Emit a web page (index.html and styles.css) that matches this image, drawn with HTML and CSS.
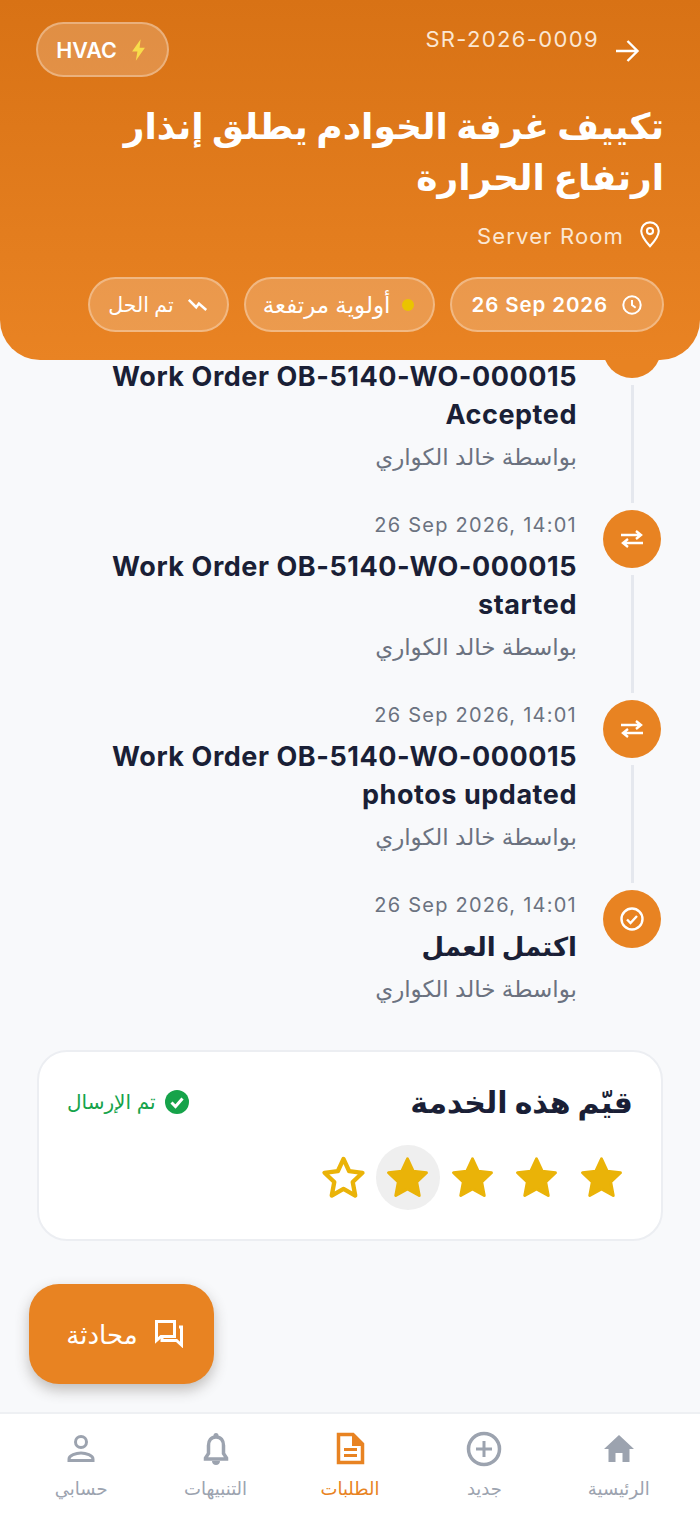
FILE: index.html
```html
<!DOCTYPE html>
<html lang="ar" dir="rtl">
<head>
  <meta charset="UTF-8" />
  <meta name="viewport" content="width=device-width, initial-scale=1.0"/>
  <title>SR-2026-0009</title>
  <link rel="stylesheet" href="styles.css">
</head>
<body>
  <div class="screen">

    <!-- Header -->
    <header class="hero">
      <div class="hero-top">
        <div class="hero-ref">
          <svg class="ic-arrow" viewBox="0 0 24 24"><path d="M1 12h21M12.500 2l10 10-10 10"/></svg>
          <span dir="ltr">SR-2026-0009</span>
        </div>
        <div class="pill pill-type">
          <svg class="ic-bolt" viewBox="0 0 14 20"><path d="M9 0 1 11.500h5L4.500 20 13 8H8z"/></svg>
          <span dir="ltr">HVAC</span>
        </div>
      </div>
      <h1>تكييف غرفة الخوادم يطلق إنذار ارتفاع الحرارة</h1>
      <div class="hero-place">
        <svg class="ic-pin" viewBox="0 0 24 24"><path d="M12 2C7.500 2 4.500 5.400 4.500 9.500 4.500 14.500 12 22.500 12 22.500s7.500-8 7.500-13C19.500 5.400 16.500 2 12 2z"/><circle cx="12" cy="9.500" r="2.600"/></svg>
        <span dir="ltr">Server Room</span>
      </div>
      <div class="chips">
        <div class="pill chip chip-date">
          <svg class="ic-clock" viewBox="0 0 24 24"><circle cx="12" cy="12" r="9.500"/><path d="M12 6.500V12l4 3"/></svg>
          <span dir="ltr">26 Sep 2026</span>
        </div>
        <div class="pill chip chip-wide">
          <span class="dot"></span>
          <span>أولوية مرتفعة</span>
        </div>
        <div class="pill chip chip-status">
          <svg class="ic-status" viewBox="0 0 24 14"><path d="M2 2l8 8 3-4 8 7"/></svg>
          <span>تم الحل</span>
        </div>
      </div>
    </header>

    <!-- Timeline -->
    <main class="content">
      <div class="timeline">
        <div class="tl-item">
          <div class="tl-rail">
            <div class="tl-node"></div>
            <div class="tl-line"></div>
          </div>
          <div class="tl-body">
            <div class="tl-date" dir="ltr">26 Sep 2026, 14:01</div>
            <div class="tl-title latin-title" dir="ltr">Work Order OB-5140-WO-000015 Accepted</div>
            <div class="tl-by">بواسطة خالد الكواري</div>
          </div>
        </div>
        <div class="tl-item">
          <div class="tl-rail">
            <div class="tl-node">
              <svg class="ic-swap" viewBox="0 0 24 18"><path d="M1 5h20M16 1l5 4-5 4M23 13H3M8 9l-5 4 5 4"/></svg>
            </div>
            <div class="tl-line"></div>
          </div>
          <div class="tl-body">
            <div class="tl-date" dir="ltr">26 Sep 2026, 14:01</div>
            <div class="tl-title latin-title" dir="ltr">Work Order OB-5140-WO-000015 started</div>
            <div class="tl-by">بواسطة خالد الكواري</div>
          </div>
        </div>
        <div class="tl-item">
          <div class="tl-rail">
            <div class="tl-node">
              <svg class="ic-swap" viewBox="0 0 24 18"><path d="M1 5h20M16 1l5 4-5 4M23 13H3M8 9l-5 4 5 4"/></svg>
            </div>
            <div class="tl-line"></div>
          </div>
          <div class="tl-body">
            <div class="tl-date" dir="ltr">26 Sep 2026, 14:01</div>
            <div class="tl-title latin-title" dir="ltr">Work Order OB-5140-WO-000015 photos updated</div>
            <div class="tl-by">بواسطة خالد الكواري</div>
          </div>
        </div>
        <div class="tl-item tl-last">
          <div class="tl-rail">
            <div class="tl-node">
              <svg class="ic-done" viewBox="0 0 24 24"><circle cx="12" cy="12" r="10.500"/><path d="M7 12.500l3.500 3.500L17 9"/></svg>
            </div>
          </div>
          <div class="tl-body">
            <div class="tl-date" dir="ltr">26 Sep 2026, 14:01</div>
            <div class="tl-title">اكتمل العمل</div>
            <div class="tl-by">بواسطة خالد الكواري</div>
          </div>
        </div>
      </div>

      <!-- Rating -->
      <section class="rate-card">
        <div class="rate-head">
          <h2>قيّم هذه الخدمة</h2>
          <div class="rate-sent">
            <svg class="ic-sent" viewBox="0 0 24 24"><circle cx="12" cy="12" r="12"/><path d="M6.500 12.500l4 4 7-8"/></svg>
            <span>تم الإرسال</span>
          </div>
        </div>
        <div class="stars">
          <span class="star"><svg viewBox="0 0 24 24"><path d="M12 2.500l2.900 6.300 6.800.8-5 4.700 1.300 6.900-6-3.400-6 3.400 1.300-6.900-5-4.700 6.800-.8z"/></svg></span>
          <span class="star"><svg viewBox="0 0 24 24"><path d="M12 2.500l2.900 6.300 6.800.8-5 4.700 1.300 6.900-6-3.400-6 3.400 1.300-6.900-5-4.700 6.800-.8z"/></svg></span>
          <span class="star"><svg viewBox="0 0 24 24"><path d="M12 2.500l2.900 6.300 6.800.8-5 4.700 1.300 6.900-6-3.400-6 3.400 1.300-6.900-5-4.700 6.800-.8z"/></svg></span>
          <span class="star star-press"><svg viewBox="0 0 24 24"><path d="M12 2.500l2.900 6.300 6.800.8-5 4.700 1.300 6.900-6-3.400-6 3.400 1.300-6.900-5-4.700 6.800-.8z"/></svg></span>
          <span class="star star-empty"><svg viewBox="0 0 24 24"><path d="M12 2.500l2.900 6.300 6.800.8-5 4.700 1.300 6.900-6-3.400-6 3.400 1.300-6.900-5-4.700 6.800-.8z"/></svg></span>
        </div>
      </section>
    </main>

    <!-- Chat button -->
    <button class="fab">
      <svg class="ic-chat" viewBox="0 0 28 28"><path d="M1.500 1.500h18v15H6l-4.500 4z"/><path d="M24 7h2.500v18l-5-4.500H7V18"/></svg>
      <span>محادثة</span>
    </button>

    <!-- Bottom nav -->
    <nav class="tabs">
      <div class="tab">
        <svg viewBox="0 0 36 36"><path class="fill" d="M18 4 3 18h4.500v13h7v-9h7v9h7V18H33z"/></svg>
        <span>الرئيسية</span>
      </div>
      <div class="tab">
        <svg viewBox="0 0 36 36"><circle class="line" cx="18" cy="18" r="15.500"/><path class="line thin" d="M18 10v16M10 18h16"/></svg>
        <span>جديد</span>
      </div>
      <div class="tab tab-on">
        <svg viewBox="0 0 36 36"><path class="line" d="M6.500 3.500H21l9.500 9.500v18.500H6.500z"/><path class="fill" d="M20 3h2l9 9v3H20z"/><path class="line thin" d="M12 18.500h13M12 24.500h13"/></svg>
        <span>الطلبات</span>
      </div>
      <div class="tab">
        <svg viewBox="0 0 36 36"><path class="line" d="M18 6c-5 0-7.500 3.500-7.500 8.500v8L7.500 27v1h21v-1l-3-4.500v-8C25.500 9.500 23 6 18 6z"/><circle class="fill" cx="18" cy="4.500" r="2.500"/><path class="fill" d="M14 30h8c0 2.500-1.800 4-4 4s-4-1.500-4-4z"/></svg>
        <span>التنبيهات</span>
      </div>
      <div class="tab">
        <svg viewBox="0 0 36 36"><circle class="line thin" cx="18" cy="11" r="5.500"/><path class="line thin" d="M6 29.500V28c0-3.500 7-6 12-6s12 2.500 12 6v1.500z"/></svg>
        <span>حسابي</span>
      </div>
    </nav>
  </div>
</body>
</html>
```
FILE: styles.css
```css
* {
  box-sizing: border-box;
}

html, body {
  margin: 0;
  padding: 0;
}

body {
  font-family: Inter, "Noto Sans", "DejaVu Sans", sans-serif;
  background: #f8f9fb;
  color: #1a1f36;
}

.screen {
  position: relative;
  width: 700px;
  height: 1515px;
  overflow: hidden;
  display: flex;
  flex-direction: column;
}

/* Header */
.hero {
  position: relative;
  z-index: 2;
  height: 360px;
  flex-shrink: 0;
  padding: 22px 36px 0;
  background: linear-gradient(to bottom, #d87215, #e98323);
  border-radius: 0 0 40px 40px;
  color: #fff;
}

.hero-top {
  display: flex;
  justify-content: space-between;
  align-items: flex-start;
}

.hero-ref {
  display: flex;
  align-items: flex-start;
  gap: 15px;
  padding: 0 24px 0 0;
  font-size: 22px;
  color: #fbe7d3;
}

.hero-ref span {
  line-height: 35px;
  letter-spacing: 1.350px;
}

.ic-arrow {
  width: 26px;
  height: 24px;
  margin-top: 17px;
  fill: none;
  stroke: #fff;
  stroke-width: 2.400;
}

.pill {
  display: flex;
  align-items: center;
  background: rgba(255, 255, 255, 0.2);
  border: 2px solid rgba(255, 255, 255, 0.3);
  border-radius: 28px;
}

.pill-type {
  height: 55px;
  width: 133px;
  padding-right: 3px;
  justify-content: center;
  gap: 14px;
  font-size: 21.500px;
  font-weight: 600;
}

.ic-bolt {
  width: 15px;
  height: 22px;
  fill: #f8dc4b;
}

h1 {
  margin: 24px 0 0;
  font-size: 36px;
  line-height: 51px;
  font-weight: 700;
}

.hero-place {
  display: flex;
  align-items: center;
  gap: 12px;
  margin-top: 20px;
  font-size: 22px;
  color: #fbe7d3;
}

.hero-place span {
  letter-spacing: 1.150px;
}

.ic-pin {
  width: 28px;
  height: 28px;
  margin-top: -4px;
  fill: none;
  stroke: #fff;
  stroke-width: 1.800;
}

.chips {
  display: flex;
  gap: 15px;
  margin-top: 28px;
}

.chip {
  height: 55px;
  padding: 0 18px;
  gap: 13px;
  font-size: 20.500px;
  font-weight: 500;
}

.chip-date {
  padding: 0 19px;
  font-weight: 600;
  letter-spacing: 0.9px;
}

.chip-wide {
  padding: 0 19px 0 17px;
  gap: 12px;
  font-size: 23px;
}

.ic-clock {
  width: 22px;
  height: 22px;
  fill: none;
  stroke: #fff;
  stroke-width: 2.200;
}

.dot {
  width: 12px;
  height: 12px;
  border-radius: 50%;
  background: #eac400;
}

.ic-status {
  width: 22px;
  height: 13px;
  fill: none;
  stroke: #fff;
  stroke-width: 2.800;
}

/* Timeline */
.content {
  margin-top: -40px;
  padding: 0 37px 0;
}

.timeline {
  padding-right: 2px;
}

.tl-item {
  display: flex;
  gap: 26px;
  height: 190px;
}

.tl-last {
  height: 150px;
}

.tl-rail {
  display: flex;
  flex-direction: column;
  align-items: center;
  width: 58px;
  flex-shrink: 0;
}

.tl-node {
  display: flex;
  align-items: center;
  justify-content: center;
  width: 58px;
  height: 58px;
  border-radius: 50%;
  background: #e88322;
}

.tl-line {
  flex: 1;
  width: 3px;
  margin: 7px 0 7px;
  background: #e5e8ee;
}

.tl-body {
  width: 466px;
}

.tl-date {
  font-size: 20px;
  line-height: 31px;
  letter-spacing: 1.250px;
  text-align: right;
  color: #6b7280;
}

.tl-title {
  margin-top: 7px;
  font-size: 26px;
  line-height: 38px;
  font-weight: 700;
  text-align: right;
}

.latin-title {
  font-size: 27px;
  letter-spacing: 0.550px;
}

.tl-by {
  margin-top: 5px;
  font-size: 23px;
  line-height: 36px;
  color: #6b7280;
}

.ic-swap {
  width: 24px;
  height: 18px;
  fill: none;
  stroke: #fff;
  stroke-width: 2.400;
}

.ic-done {
  width: 24px;
  height: 24px;
  fill: none;
  stroke: #fff;
  stroke-width: 2.400;
}

/* Rating */
.rate-card {
  height: 191px;
  margin-top: 10px;
  padding: 28px 28px 0 28px;
  background: #fff;
  border: 2px solid #eceef2;
  border-radius: 30px;
}

.rate-head {
  display: flex;
  justify-content: space-between;
  align-items: center;
}

h2 {
  margin: 0;
  font-size: 30px;
  line-height: 44px;
  font-weight: 700;
}

.rate-sent {
  display: flex;
  align-items: center;
  gap: 9px;
  font-size: 20px;
  color: #16a34a;
}

.ic-sent {
  width: 24px;
  height: 24px;
  fill: #16a34a;
  stroke: none;
}

.ic-sent path {
  fill: none;
  stroke: #fff;
  stroke-width: 3;
}

.stars {
  display: flex;
  margin-top: 21px;
  margin-right: -0.500px;
}

.star {
  display: flex;
  align-items: center;
  justify-content: center;
  width: 64.500px;
  height: 65px;
  border-radius: 50%;
}

.star svg {
  width: 47px;
  height: 47px;
  fill: #eab308;
  stroke: #eab308;
  stroke-width: 1.500;
  stroke-linejoin: round;
}

.star-press {
  background: #efefef;
}

.star-empty svg {
  fill: #fff;
  stroke-width: 2.200;
}

/* Chat button */
.fab {
  position: absolute;
  left: 29px;
  top: 1284px;
  z-index: 3;
  display: flex;
  align-items: center;
  justify-content: center;
  gap: 17px;
  width: 185px;
  height: 100px;
  padding: 0 0 0 6px;
  border: none;
  border-radius: 30px;
  background: #e88322;
  box-shadow: 0 6px 14px rgba(60, 50, 40, 0.3);
  color: #fff;
  font-family: inherit;
  font-size: 26px;
  font-weight: 500;
}

.ic-chat {
  width: 28px;
  height: 28px;
  fill: none;
  stroke: #fff;
  stroke-width: 3;
}

/* Bottom nav */
.tabs {
  position: absolute;
  left: 0;
  right: 0;
  bottom: 0;
  height: 103px;
  padding: 0 14px;
  display: flex;
  background: #fff;
  border-top: 2px solid #eef0f3;
}

.tab {
  flex: 1;
  display: flex;
  flex-direction: column;
  align-items: center;
  padding-top: 17px;
  font-size: 18px;
  color: #9ca3af;
}

.tab svg {
  width: 36px;
  height: 36px;
  margin-bottom: 11px;
}

.tab .fill {
  fill: #9ca3af;
}

.tab .line {
  fill: none;
  stroke: #9ca3af;
  stroke-width: 3.500;
}

.tab .thin {
  stroke-width: 3;
}

.tab-on {
  color: #e88322;
}

.tab-on .fill {
  fill: #e88322;
}

.tab-on .line {
  stroke: #e88322;
}
```
